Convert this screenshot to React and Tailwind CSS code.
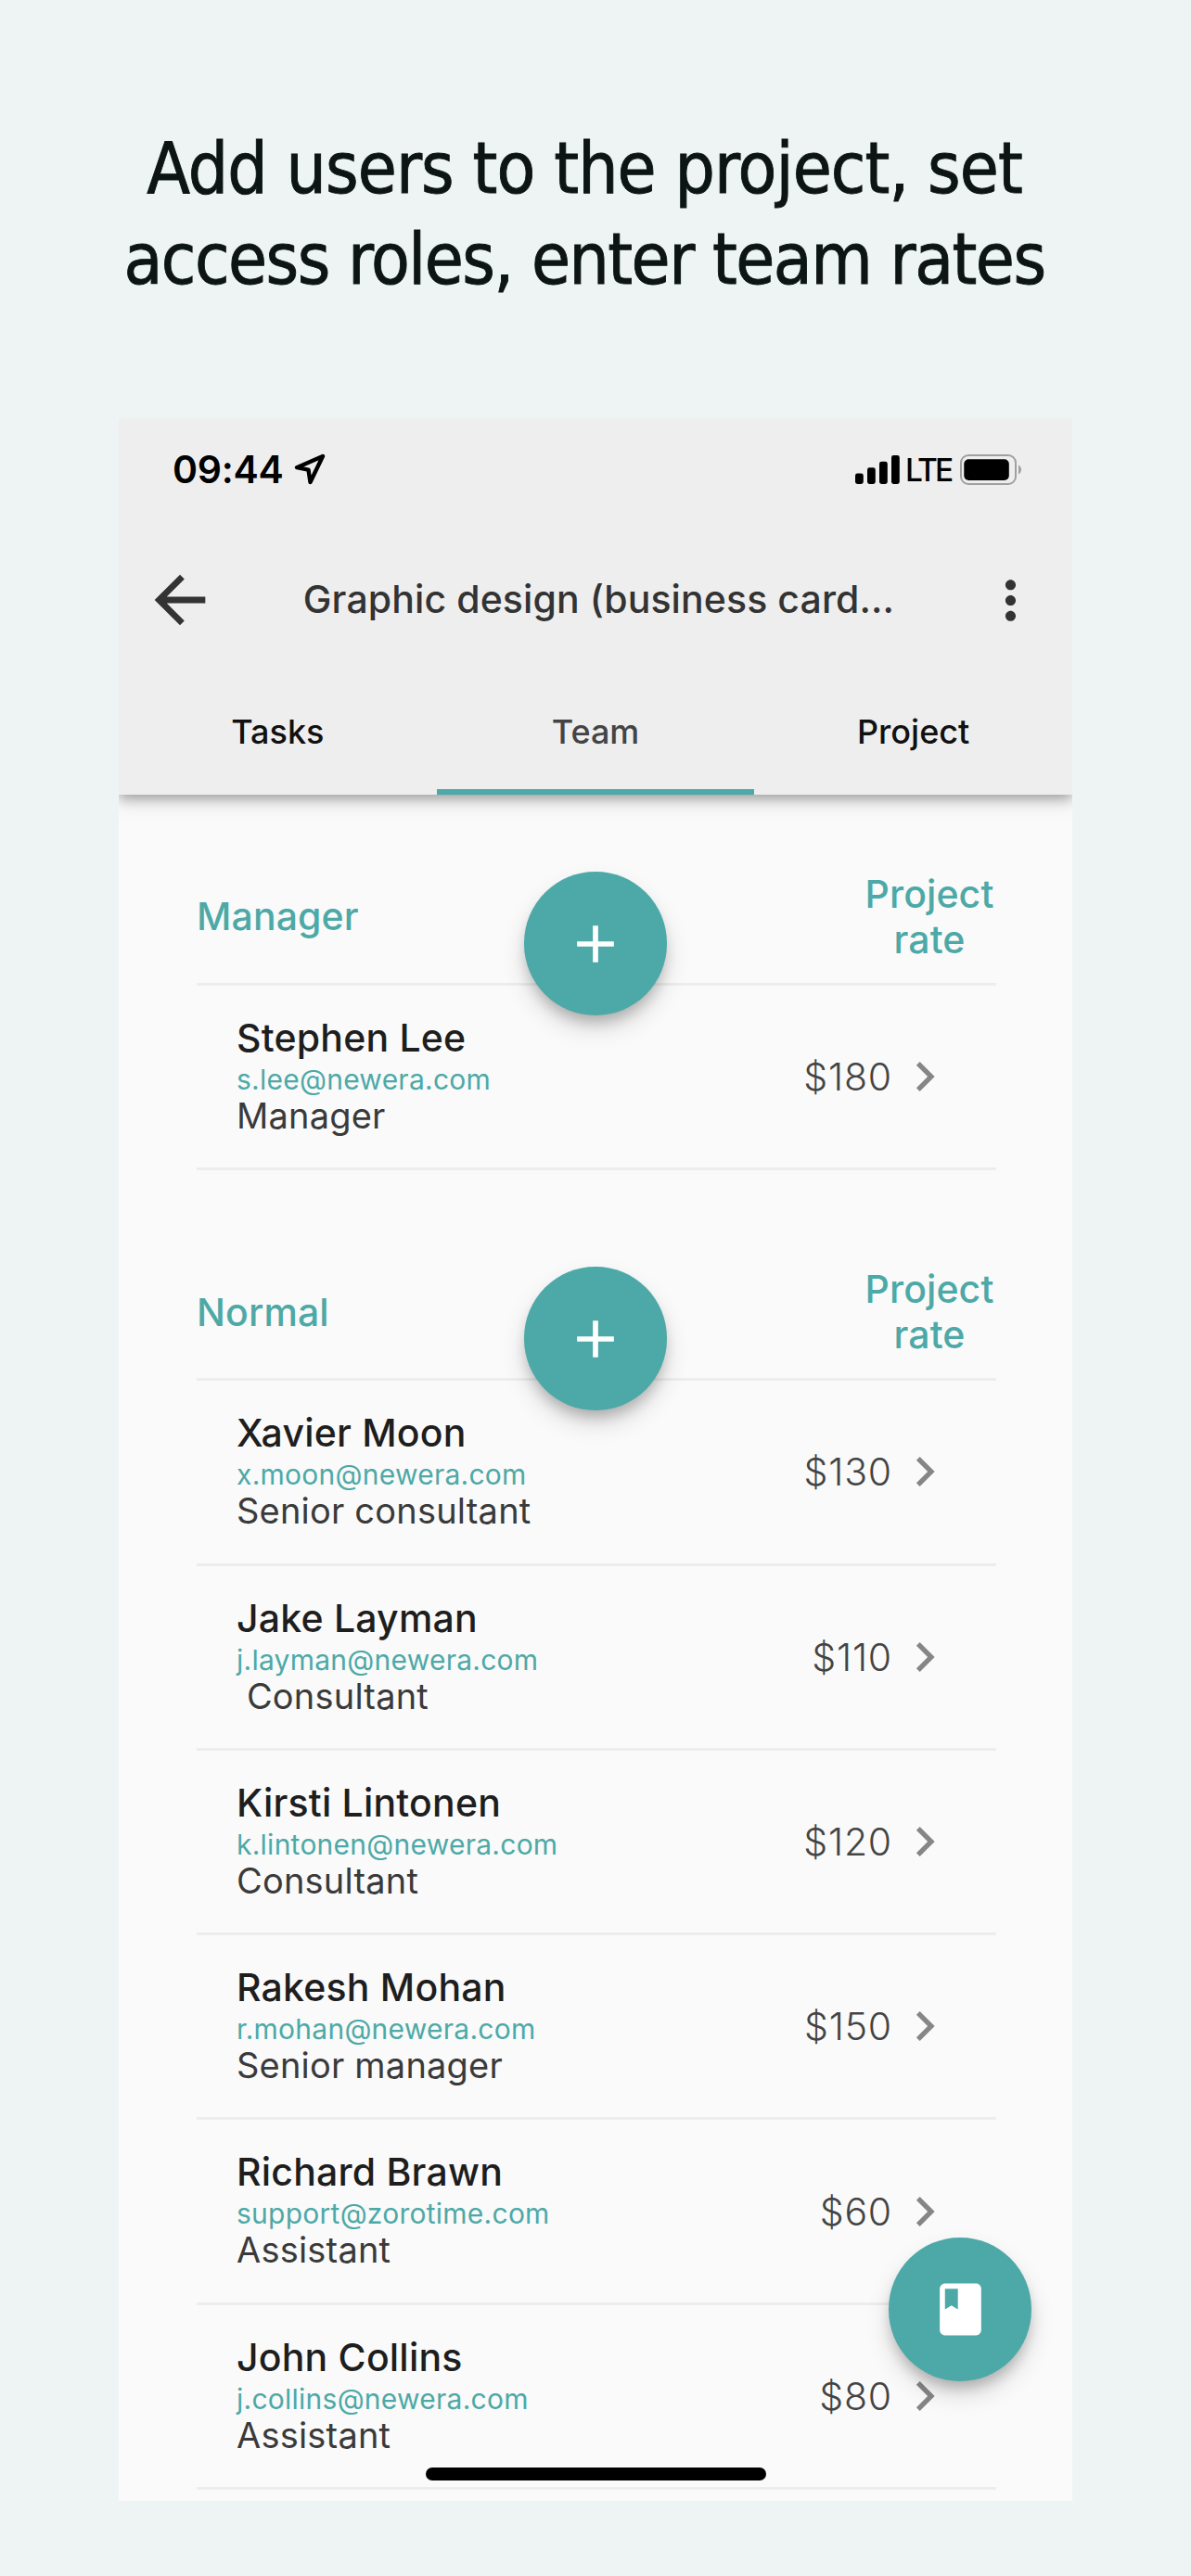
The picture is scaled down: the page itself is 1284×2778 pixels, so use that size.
import React from 'react';
import { MdAdd, MdArrowBack, MdBook, MdChevronRight, MdMoreVert } from 'react-icons/md';

const tabs = ['Tasks', 'Team', 'Project'];

const groups = [
    {
        title: 'Manager',
        members: [
            { name: 'Stephen Lee', email: 's.lee@newera.com', role: 'Manager', rate: '$180' },
        ],
    },
    {
        title: 'Normal',
        members: [
            { name: 'Xavier Moon', email: 'x.moon@newera.com', role: 'Senior consultant', rate: '$130' },
            { name: 'Jake Layman', email: 'j.layman@newera.com', role: ' Consultant', rate: '$110' },
            { name: 'Kirsti Lintonen', email: 'k.lintonen@newera.com', role: 'Consultant', rate: '$120' },
            { name: 'Rakesh Mohan', email: 'r.mohan@newera.com', role: 'Senior manager', rate: '$150' },
            { name: 'Richard Brawn', email: 'support@zorotime.com', role: 'Assistant', rate: '$60' },
            { name: 'John Collins', email: 'j.collins@newera.com', role: 'Assistant', rate: '$80' },
        ],
    },
];

function StatusBar() {
    return (
        <div className="flex h-[110px] items-center justify-between pl-[58px] pr-[54px] text-black">
            <div className="flex items-center gap-[12px]">
                <span className="text-[41px] leading-[48px] font-semibold tracking-[-0.3px]">09:44</span>
                <svg className="h-[34px] w-[34px]" viewBox="0 0 34 34" fill="none" stroke="currentColor" strokeWidth="4.4" strokeLinejoin="round">
                    <path d="M31 3L3 15.2L15.5 17.6L17.5 31Z" />
                </svg>
            </div>
            <div className="flex items-center">
                <svg className="h-[31px] w-[48px]" viewBox="0 0 48 31" fill="currentColor">
                    <rect x="0" y="19.5" width="8.8" height="11.5" rx="2.4" />
                    <rect x="13" y="13.3" width="8.8" height="17.7" rx="2.4" />
                    <rect x="26" y="6.8" width="8.8" height="24.2" rx="2.4" />
                    <rect x="39" y="0" width="8.8" height="31" rx="2.4" />
                </svg>
                <span className="ml-[6px] w-[52px] pt-[2px] text-[33.5px] leading-[40px] font-medium tracking-[-2.8px]">LTE</span>
                <svg className="ml-[7px] h-[33px] w-[67px]" viewBox="0 0 67 33">
                    <rect x="1" y="1" width="59" height="31" rx="8" fill="none" stroke="#a0a0a0" strokeWidth="2" />
                    <rect x="4.3" y="5.3" width="48.5" height="22.6" rx="5" fill="#000" />
                    <path d="M63 11.5v10c2-1 3-3 3-5s-1-4-3-5z" fill="#a0a0a0" />
                </svg>
            </div>
        </div>
    );
}

function AddButton() {
    return (
        <button className="absolute left-[353px] top-[24px] z-10 flex h-[155px] w-[154px] items-center justify-center rounded-full bg-[#4da9a7] text-white shadow-[0_10px_14px_-3px_rgba(0,0,0,0.2),0_14px_26px_rgba(0,0,0,0.14)]">
            <MdAdd className="size-[68px]" />
        </button>
    );
}

function MemberRow({ member }) {
    return (
        <li className="flex h-[199.3px] justify-between border-b-[3px] border-[#ededed] pl-[43px] pr-[45px]">
            <div className="pt-[33px]">
                <div className="text-[41px] leading-[46px] font-medium tracking-[0.2px] text-[#1e1e1e]">{member.name}</div>
                <div className="pt-[2px] text-[30px] leading-[40px] tracking-[0.25px] text-[#4da9a7]">{member.email}</div>
                <div className="text-[38px] leading-[39px] tracking-[0.2px] whitespace-pre text-[#3a3a3a]">{member.role}</div>
            </div>
            <div className="flex items-center gap-[3px] text-[#444]">
                <span className="text-[41px] leading-[48px] font-light tracking-[0.8px]">{member.rate}</span>
                <MdChevronRight className="size-[64px] text-[#868686]" />
            </div>
        </li>
    );
}

function MemberGroup({ group }) {
    return (
        <section>
            <div className="relative flex h-[147px] items-center justify-between border-b-[3px] border-[#ededed] pt-[2px] text-[41px] font-medium tracking-[0.1px] text-[#4da9a7]">
                <h2>{group.title}</h2>
                <div className="w-[144px] text-center leading-[49.5px]">Project rate</div>
                <AddButton />
            </div>
            <ul>
                {group.members.map((member) => (
                    <MemberRow key={member.email} member={member} />
                ))}
            </ul>
        </section>
    );
}

export default function App() {
    return (
        <div className="flex h-[2778px] w-[1284px] flex-col bg-[#eef4f4] font-['Inter',sans-serif]">
            <h1 className="h-[451px] pt-[133px] pr-[24px] text-center font-['DejaVu_Sans_Condensed','DejaVu_Sans',sans-serif] text-[76px] leading-[98px] text-[#0c1514] [font-stretch:condensed] [-webkit-text-stroke:0.9px_#0c1514]">
                <span className="block tracking-[-0.9px]">Add users to the project, set</span>
                <span className="block tracking-[-1.5px]">access roles, enter team rates</span>
            </h1>

            <div className="relative mx-auto h-[2246px] w-[1028px] overflow-hidden bg-[#fafafa]">
                <header className="relative flex h-[406px] flex-col bg-[#eeeeee] shadow-[0_4px_12px_rgba(0,0,0,0.3),0_10px_20px_rgba(0,0,0,0.1)]">
                    <StatusBar />
                    <div className="flex h-[172px] items-center justify-between pl-[25px] pr-[33px] text-[#333]">
                        <MdArrowBack className="size-[82px]" />
                        <span className="pb-[2px] text-[41px] leading-[48px] font-medium tracking-[0.1px]">Graphic design (business card...</span>
                        <MdMoreVert className="size-[67px]" />
                    </div>
                    <nav className="grid flex-1 grid-cols-3 text-[36px] font-medium">
                        {tabs.map((tab) => (
                            <button
                                key={tab}
                                className={`flex items-center justify-center border-b-[6px] pb-[6px] ${tab === 'Team' ? 'border-[#4da9a7] text-[#444]' : 'border-transparent text-[#111]'}`}
                            >
                                {tab}
                            </button>
                        ))}
                    </nav>
                </header>

                <main className="flex flex-col gap-[80px] pt-[59px] pr-[82px] pl-[84px]">
                    {groups.map((group) => (
                        <MemberGroup key={group.title} group={group} />
                    ))}
                </main>

                {/* Journal button */}
                <button className="absolute top-[1962px] left-[830px] z-20 flex h-[155px] w-[154px] items-center justify-center rounded-full bg-[#4da9a7] text-white shadow-[0_10px_14px_-3px_rgba(0,0,0,0.2),0_14px_26px_rgba(0,0,0,0.14)]">
                    <MdBook className="size-[67px]" />
                </button>

                {/* Home indicator */}
                <div className="absolute bottom-[22px] left-[331px] h-[14px] w-[367px] rounded-full bg-black" />
            </div>
        </div>
    );
}
